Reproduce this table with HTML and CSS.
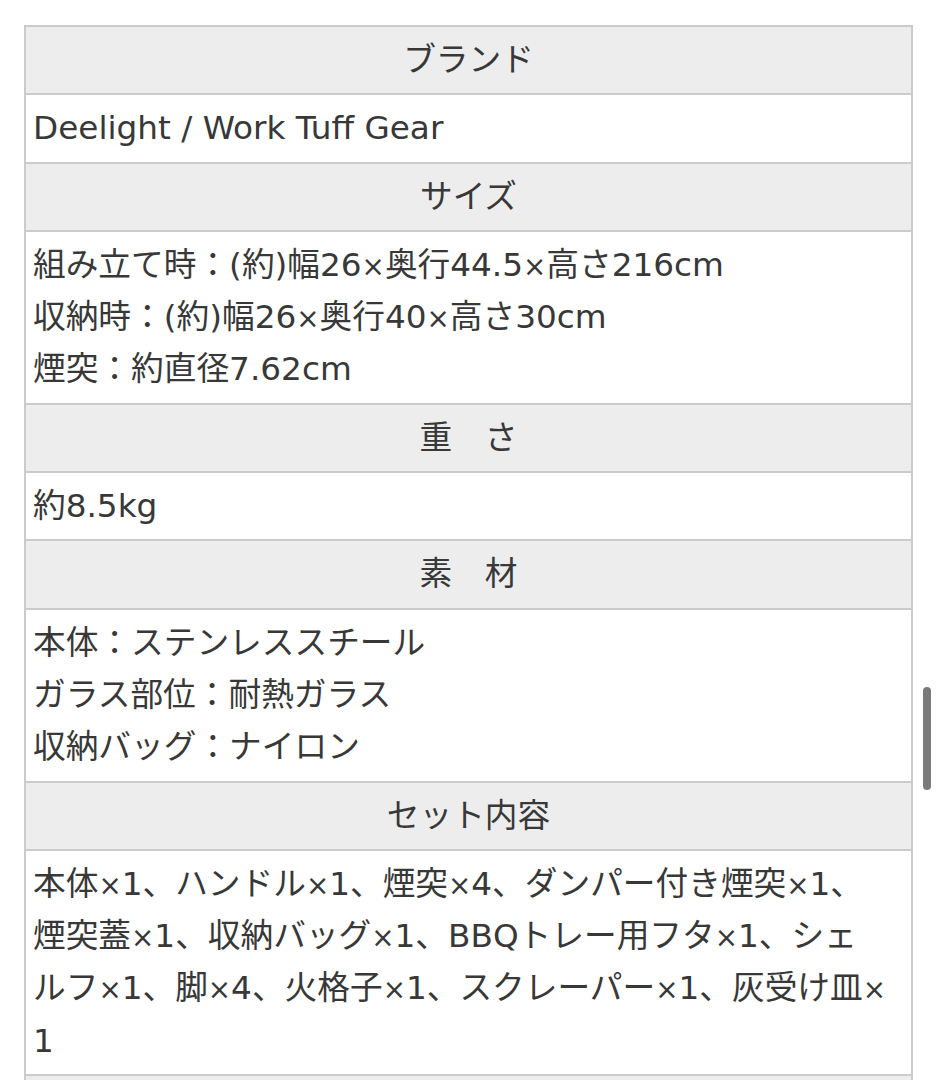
FILE: index.html
```html
<!DOCTYPE html>
<html lang="ja">
<head>
<meta charset="utf-8">
<title>仕様</title>
<link rel="stylesheet" href="styles.css">
</head>
<body>
<div class="page">
  <table class="spec">
    <tr><th>ブランド</th></tr>
    <tr><td>Deelight / Work Tuff Gear</td></tr>
    <tr><th>サイズ</th></tr>
    <tr><td>組み立て時：(約)幅26<span class="x">×</span>奥行44.5<span class="x">×</span>高さ216cm<br>収納時：(約)幅26<span class="x">×</span>奥行40<span class="x">×</span>高さ30cm<br>煙突：約直径7.62cm</td></tr>
    <tr><th>重　さ</th></tr>
    <tr><td>約8.5kg</td></tr>
    <tr><th>素　材</th></tr>
    <tr><td>本体：ステンレススチール<br>ガラス部位：耐熱ガラス<br>収納バッグ：ナイロン</td></tr>
    <tr><th>セット内容</th></tr>
    <tr><td>本体<span class="x">×</span>1、ハンドル<span class="x">×</span>1、煙突<span class="x">×</span>4、ダンパー付き煙突<span class="x">×</span>1、<br>煙突蓋<span class="x">×</span>1、収納バッグ<span class="x">×</span>1、BBQトレー用フタ<span class="x">×</span>1、シェ<br>ルフ<span class="x">×</span>1、脚<span class="x">×</span>4、火格子<span class="x">×</span>1、スクレーパー<span class="x">×</span>1、灰受け皿<span class="x">×</span><br>1</td></tr>
    <tr><th>&nbsp;</th></tr>
  </table>
  <div class="scrollbar"></div>
</div>
</body>
</html>
```

FILE: styles.css
```css
html, body {
  margin: 0;
  padding: 0;
  background: #ffffff;
}

.page {
  padding: 25px 25px 0 24px;
  font-family: "DejaVu Sans", "Noto Sans CJK JP", sans-serif;
  color: #383838;
}

.spec {
  width: 889px;
  border-collapse: collapse;
  table-layout: fixed;
}

.spec th,
.spec td {
  border: 2px solid #cbcbcb;
  padding: 7px 7px;
  font-size: 32.7px;
  line-height: 52.3px;
  font-weight: 400;
}

.spec th {
  background: #ededed;
  text-align: center;
}

.spec td {
  background: #ffffff;
  text-align: left;
}

.x {
  font-size: 0.85em;
  line-height: 0;
}

.scrollbar {
  position: fixed;
  left: 923px;
  top: 687px;
  width: 8px;
  height: 103px;
  border-radius: 4px;
  background: #7a7a7a;
}
```
